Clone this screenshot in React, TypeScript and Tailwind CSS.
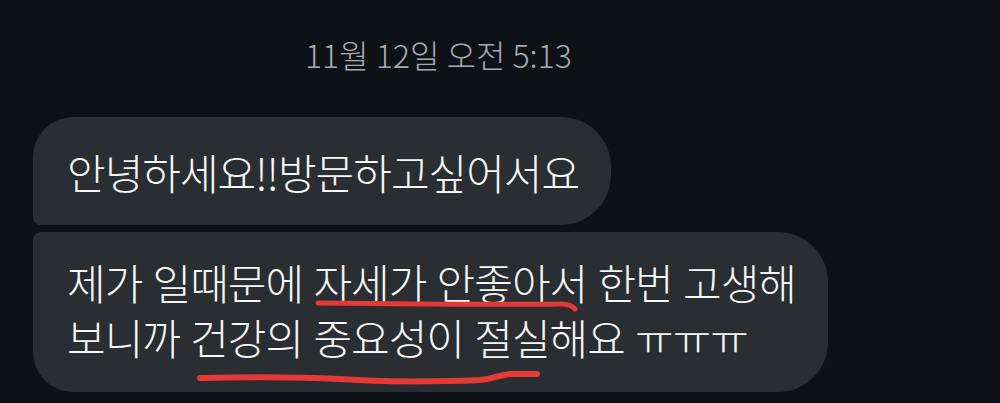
import React from "react";

export default function App() {
  return (
    <div
      className="relative w-[1000px] h-[403px] overflow-hidden bg-[#0e1116]"
      style={{ fontFamily: '"Noto Sans CJK KR", "Noto Sans", sans-serif' }}
    >
      <div className="pt-[35px] pl-[305px] text-[32px] leading-[38px] font-light text-[#a6abb1]">
        11월 12일 오전 5:13
      </div>
      <div className="mt-[44px] ml-[33px] flex flex-col items-start gap-[7px]">
        <div className="w-[578px] h-[108px] pl-[34px] flex items-center bg-[#2a2d31] rounded-tl-[40px] rounded-bl-[8px] rounded-r-[50px] text-[#f7f7f7] text-[42px] leading-[55px] font-light tracking-[-1px]">
          안녕하세요!!방문하고싶어서요
        </div>
        <div className="w-[795px] h-[160px] pl-[34px] pt-[22px] bg-[#2a2d31] rounded-tl-[8px] rounded-bl-[40px] rounded-r-[50px] text-[#f7f7f7] text-[42px] leading-[55px] font-light tracking-[-1px] [word-spacing:2px]">
          <div>제가 일때문에 자세가 안좋아서 한번 고생해</div>
          <div>보니까 건강의 중요성이 절실해요 ㅠㅠㅠ</div>
        </div>
      </div>
      <svg
        className="absolute left-0 top-0 pointer-events-none"
        width="1000"
        height="403"
        viewBox="0 0 1000 403"
      >
        <path
          d="M318 303 C400 304 480 305 560 304 C568 304 573 306 575 309"
          stroke="#e53935"
          strokeWidth="5"
          fill="none"
          strokeLinecap="round"
        />
        <path
          d="M200 378 C250 377 300 377 340 379 C380 382 430 382 480 380 C495 379 498 375 510 374 L537 374"
          stroke="#e53935"
          strokeWidth="6"
          fill="none"
          strokeLinecap="round"
        />
      </svg>
    </div>
  );
}
